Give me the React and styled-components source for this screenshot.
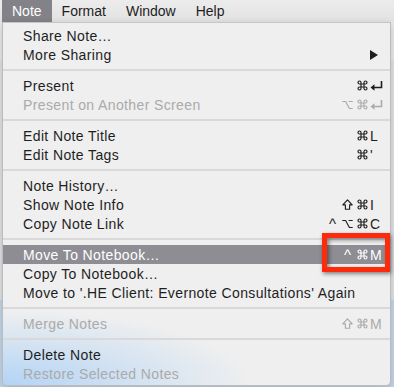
import React from "react";
import styled, { createGlobalStyle } from "styled-components";

const Global = createGlobalStyle`
  html, body { margin: 0; padding: 0; }
  body {
    width: 394px;
    height: 387px;
    overflow: hidden;
    font-family: "Liberation Sans", "DejaVu Sans", Arial, sans-serif;
    -webkit-font-smoothing: antialiased;
  }
`;

const Screen = styled.div`
  width: 394px;
  height: 387px;
  display: flex;
  flex-direction: column;
  background: linear-gradient(to bottom, #e9e9e9 0 60px, #e0e2e4 60px 300px, #c3d6ea 300px 387px);
`;

const MenuBar = styled.div`
  height: 22px;
  flex: none;
  display: flex;
  align-items: stretch;
  padding-left: 2px;
  background: linear-gradient(to bottom, #ececec, #e2e2e2);
`;

const BarItem = styled.div`
  display: flex;
  align-items: center;
  padding: 0 10px;
  font-size: 14px;
  color: ${(p) => (p.$active ? "#ffffff" : "#1e1e1e")};
  background: ${(p) => (p.$active ? "#838288" : "transparent")};
`;

const Menu = styled.div`
  position: relative;
  box-sizing: border-box;
  width: 389px;
  margin-left: 2px;
  flex: none;
  display: flex;
  flex-direction: column;
  padding: 3px 0 2px;
  border: 1px solid #bcbcbc;
  border-top-color: #c6c6c6;
  border-radius: 0 0 5px 5px;
  background:
    radial-gradient(ellipse 250px 75px at 0% 100%, rgba(175, 210, 246, 0.95), rgba(190, 220, 250, 0) 100%),
    #efefef;
  box-shadow: 0 3px 8px rgba(0, 0, 0, 0.18);
`;

const Row = styled.div`
  position: relative;
  height: 19px;
  display: flex;
  align-items: center;
  padding: 0 7px 0 20px;
  font-size: 14px;
  white-space: nowrap;
  color: ${(p) => (p.$selected ? "#ffffff" : p.$disabled ? "#aaaaaa" : "#1e1e1e")};
  background: ${(p) => (p.$selected ? "#8e8d93" : "transparent")};
`;

const Label = styled.span`
  flex: 1;
  letter-spacing: 0.38px;
`;

const Shortcut = styled.span`
  display: flex;
  align-items: center;
`;

const ModSlot = styled.span`
  width: 15px;
  height: 19px;
  display: flex;
  align-items: center;
  justify-content: center;
`;

const Caret = styled.span`
  font-size: 15px;
  line-height: 19px;
`;

const ModIcon = styled.svg`
  width: 11px;
  height: 11px;
  fill: none;
  stroke: currentColor;
  stroke-width: 1.15;
  stroke-linejoin: round;
`;

const Key = styled.span`
  width: 13px;
  display: flex;
  align-items: center;
  font-size: 14px;
`;

const Arrow = styled.svg`
  width: 8px;
  height: 10px;
  margin-right: 5px;
  fill: #1e1e1e;
`;

const ReturnIcon = styled.svg`
  width: 13px;
  height: 11px;
  stroke: currentColor;
  fill: none;
`;

const Separator = styled.div`
  height: 2px;
  margin: 5px 0;
  background: #d9d9d9;
`;

const Callout = styled.div`
  position: absolute;
  right: 0;
  top: -12px;
  width: 68px;
  height: 39px;
  box-sizing: border-box;
  border: 5px solid #fd2b0c;
  box-shadow: 1px 2px 4px rgba(0, 0, 0, 0.45), inset 2px 2px 4px rgba(0, 0, 0, 0.45);
  pointer-events: none;
`;

const Return = () => (
  <ReturnIcon viewBox="0 0 13 11">
    <path d="M11.5 1 V7.5 H3" strokeWidth="1.6" />
    <path d="M0.5 7.5 L4.5 4.3 L4.5 10.7 Z" fill="currentColor" stroke="none" />
  </ReturnIcon>
);

const modPaths = {
  cmd: "M4 4 V2.5 A1.5 1.5 0 1 0 2.5 4 H8.5 A1.5 1.5 0 1 0 7 2.5 V8.5 A1.5 1.5 0 1 0 8.5 7 H2.5 A1.5 1.5 0 1 0 4 8.5 Z",
  opt: "M0.3 2.5 H3.6 L7.4 9.5 H10.7 M6.6 2.5 H10.7",
  shift: "M5.5 0.8 L10.2 5.8 H7.6 V10.2 H3.4 V5.8 H0.8 Z",
};

const SC = ({ mods = [], k }) => (
  <Shortcut>
    {mods.map((m) => (
      <ModSlot key={m}>
        {m === "ctrl" ? (
          <Caret>^</Caret>
        ) : (
          <ModIcon viewBox="0 0 11 11">
            <path d={modPaths[m]} />
          </ModIcon>
        )}
      </ModSlot>
    ))}
    <Key>{k === "ret" ? <Return /> : k}</Key>
  </Shortcut>
);

const Item = ({ label, mods, k, disabled, selected, submenu, children }) => (
  <Row $disabled={disabled} $selected={selected}>
    <Label>{label}</Label>
    {submenu && (
      <Arrow viewBox="0 0 8 10">
        <path d="M0 0 L8 5 L0 10 Z" />
      </Arrow>
    )}
    {k && <SC mods={mods} k={k} />}
    {children}
  </Row>
);

export default function App() {
  return (
    <>
      <Global />
      <Screen>
        <MenuBar>
          <BarItem $active>Note</BarItem>
          <BarItem>Format</BarItem>
          <BarItem>Window</BarItem>
          <BarItem>Help</BarItem>
        </MenuBar>
        <Menu>
          <Item label="Share Note…" />
          <Item label="More Sharing" submenu />
          <Separator />
          <Item label="Present" mods={["cmd"]} k="ret" />
          <Item label="Present on Another Screen" mods={["opt", "cmd"]} k="ret" disabled />
          <Separator />
          <Item label="Edit Note Title" mods={["cmd"]} k="L" />
          <Item label="Edit Note Tags" mods={["cmd"]} k="'" />
          <Separator />
          <Item label="Note History…" />
          <Item label="Show Note Info" mods={["shift", "cmd"]} k="I" />
          <Item label="Copy Note Link" mods={["ctrl", "opt", "cmd"]} k="C" />
          <Separator />
          <Item label="Move To Notebook…" mods={["ctrl", "cmd"]} k="M" selected>
            <Callout />
          </Item>
          <Item label="Copy To Notebook…" />
          <Item label="Move to '.HE Client: Evernote Consultations' Again" />
          <Separator />
          <Item label="Merge Notes" mods={["shift", "cmd"]} k="M" disabled />
          <Separator />
          <Item label="Delete Note" />
          <Item label="Restore Selected Notes" disabled />
        </Menu>
      </Screen>
    </>
  );
}
